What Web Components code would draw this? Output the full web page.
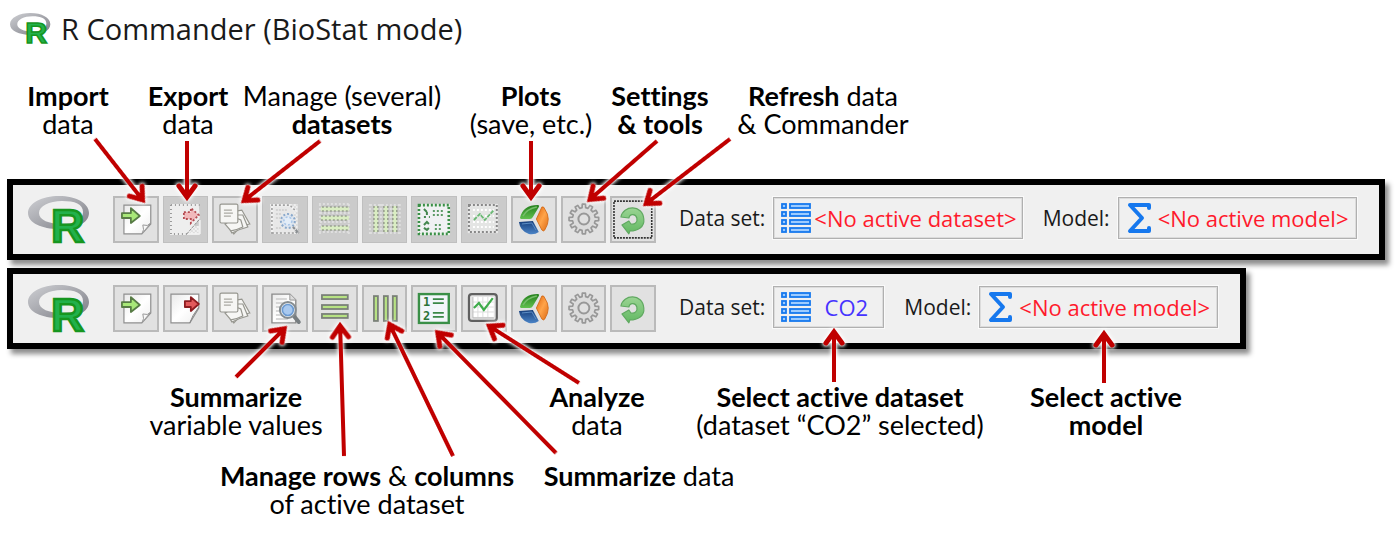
<!DOCTYPE html>
<html lang="en">
<head>
<meta charset="utf-8">
<title>R Commander (BioStat mode)</title>
<style>
  body { margin: 0; background: #fff; color: #000; font-family: "Open Sans", "Noto Sans", sans-serif; }
</style>
</head>
<body>
<commander-guide></commander-guide>

<script>
const define = (name, html) => customElements.define(name, class extends HTMLElement {
  constructor() {
    super();
    this.attachShadow({ mode: "open" });
  }
  connectedCallback() {
    this.shadowRoot.innerHTML = typeof html === "function" ? html(this) : html;
  }
});

/* Gear outline with evenly spaced teeth */
function gear(cx, cy, outer, inner, teeth) {
  const points = [];
  for (let i = 0; i < teeth; i++) {
    const a = (i * 2 * Math.PI) / teeth, s = Math.PI / teeth;
    for (const [r, o] of [[inner, -0.6], [outer, -0.4], [outer, 0.4], [inner, 0.6]])
      points.push((cx + r * Math.sin(a + o * s)).toFixed(1) + " " + (cy - r * Math.cos(a + o * s)).toFixed(1));
  }
  return "M" + points.join("L") + "Z";
}

const defs = `<defs>
  <linearGradient id="paper" x1="0" y1="0" x2="1" y2="1"><stop offset="0" stop-color="#e9e9e9"/><stop offset=".5" stop-color="#fff"/><stop offset="1" stop-color="#eee"/></linearGradient>
  <linearGradient id="green" x1="0" y1="0" x2="0" y2="1"><stop offset="0" stop-color="#237f1c"/><stop offset="1" stop-color="#62c04f"/></linearGradient>
  <linearGradient id="blue" x1="0" y1="0" x2="0" y2="1"><stop offset="0" stop-color="#173f7c"/><stop offset="1" stop-color="#4a83c6"/></linearGradient>
  <linearGradient id="orange" x1="0" y1="0" x2="1" y2="1"><stop offset="0" stop-color="#e0650c"/><stop offset=".5" stop-color="#ffa44a"/><stop offset="1" stop-color="#dc6a14"/></linearGradient>
  <linearGradient id="leaf" x1="0" y1="0" x2="0" y2="1"><stop offset="0" stop-color="#9ad493"/><stop offset="1" stop-color="#62b862"/></linearGradient>
  <pattern id="dots" width="4" height="4" patternUnits="userSpaceOnUse"><rect width="4" height="4" fill="#777"/><rect width="2" height="2" fill="#fff"/><rect x="2" y="2" width="2" height="2" fill="#fff"/></pattern>
  <mask id="stipple"><rect width="46" height="47" fill="url(#dots)"/></mask>
</defs>`;

const page = `
  <path d="M10 9H28L34 15V38H10Z" fill="url(#paper)" stroke="#8c8c8c" stroke-width="1.4"/>
  <path d="M28 9V15H34" fill="#ddd" stroke="#999"/>
  <path d="M14 14H25M14 18H23M14 22H20M14 26H18M14 30H20M14 34H26" stroke="#ccc" stroke-width="1.4"/>`;

const icons = {
  "import": `
    <path d="M11 9H38V28L29 38H11Z" fill="url(#paper)" stroke="#8f8f8f" stroke-width="1.2"/>
    <path d="M29 38Q32 34 30 29Q35 31 38 27Z" fill="#f8f8f8" stroke="#999"/>
    <path d="M9 17H18V12L27 20L18 27V22H9Z" fill="#a8e878" stroke="#587c46" stroke-width="1.8" stroke-linejoin="round"/>`,
  "export": `
    <path d="M8 9H36V23L27 38H8Z" fill="url(#paper)" stroke="#8f8f8f" stroke-width="1.2"/>
    <path d="M27 38Q29 31 36 22" fill="none" stroke="#888"/>
    <path d="M22 16H28V12L36 19L28 26V22H22Z" fill="#e25a5c" stroke="#8d1c20" stroke-width="1.8" stroke-linejoin="round"/>`,
  "export-off": `
    <path d="M8 9H36L37 22L26 38H8Z" fill="#eee"/>
    <path d="M8 9H37M8 9V38H37M37 24V38" fill="none" stroke="#eee" stroke-width="2"/>
    <path d="M8 9H37M8 9V38H27" fill="none" stroke="#999" stroke-width="2" stroke-dasharray="1 3"/>
    <path d="M30 30H37V38H24Z" fill="#f2f2f2" mask="url(#stipple)"/>
    <path d="M24 38L36 24" stroke="#888" stroke-dasharray="3 1"/>
    <path d="M21 16H28V12L36 19L28 27V23H21Z" fill="#f1b9bb"/>
    <path d="M21 16H28V12L36 19L28 27V23H21Z" fill="none" stroke="#b44c52" stroke-width="1.8" stroke-dasharray="2 2"/>`,
  "datasets": `
    <g fill="#f6f6f4" stroke="#96968f" stroke-width="1.2">
      <path d="M24 15L30 14L38 28Q29 29 22 38L15 27Z"/>
      <path d="M24 19L31 19L36 31Q28 33 20 37L15 28Z"/>
      <path d="M24 22L29 24L31 31Q25 34 19 35L13 28Z"/>
      <rect x="8" y="8" width="18" height="19" rx="1.5"/>
    </g>
    <path d="M12 14H20M12 17H21M12 20H19" stroke="#aaa9a2" stroke-width="1.3"/>`,
  "lens": `${page}
    <path d="M32 31L37 37" stroke="#777d80" stroke-width="4" stroke-linecap="round"/>
    <circle cx="26" cy="25" r="8" fill="#e8edf2" stroke="#858c90" stroke-width="2"/>
    <circle cx="26" cy="25" r="5.5" fill="#a9c9ef" stroke="#6c9bd2" stroke-width="1.6"/>`,
  "lens-off": `<path d="M8 8H36V38H10Z" fill="#eee" mask="url(#stipple)"/>
    <path d="M11 10H27L32 16V37H11Z" fill="#e8e8e8"/>
    <path d="M10 38V9H28L34 15" fill="none" stroke="#f2f2f2" stroke-width="2.4"/>
    <path d="M10 38V9H28L34 15M10 37H34" fill="none" stroke="#a0a0a0" stroke-width="1.6" stroke-dasharray="2 2"/>
    <path d="M14 14H25M14 18H20M14 22H18M14 32H20" stroke="#ccc" stroke-width="1.4" stroke-dasharray="2 1"/>
    <circle cx="26" cy="25" r="7" fill="#dde5ef" stroke="#8aa9cc" stroke-width="2" stroke-dasharray="2 2"/>
    <circle cx="26" cy="25" r="4" fill="#e3edf8" stroke="#a9c6e8" stroke-width="1.6" stroke-dasharray="2 2"/>
    <path d="M31 31L37 37M34 37L37 34" stroke="#8b8f92" stroke-width="2" stroke-dasharray="3 1"/>`,
  "rows": `<g fill="#b7e283" stroke="#7a8078" stroke-width="1.8">
      <rect x="10" y="10" width="26" height="4"/><rect x="10" y="20" width="26" height="4"/><rect x="10" y="29" width="26" height="4"/></g>`,
  "rows-off": `<g fill="none" stroke="#dfdfdf" stroke-width="2" stroke-dasharray="2 2"><path d="M7 8H38M8 17H38M8 26H38M7 36H38M8 8V38M37 8V38"/></g>
    <g fill="#d9edc2"><path d="M9 11H37V15H9ZM9 20H37V24H9ZM9 30H37V34H9Z"/></g>
    <g fill="none" stroke="#98a08f" stroke-width="1.6" stroke-dasharray="2 2"><path d="M10 11H36M10 15H36M9 20H36M9 24H36M10 30H36M10 34H36"/></g>`,
  "cols": `<g fill="#b7e283" stroke="#7a8078" stroke-width="1.8">
      <rect x="12" y="11" width="4" height="25"/><rect x="22" y="11" width="4" height="25"/><rect x="31" y="11" width="4" height="25"/></g>`,
  "cols-off": `<g fill="none" stroke="#dfdfdf" stroke-width="2" stroke-dasharray="2 2"><path d="M8 8V38M19 8V38M29 8V38M38 8V38M8 9H38M8 37H38"/></g>
    <g fill="#d9edc2"><path d="M12 10V36H16V10ZM22 10V36H26V10ZM31 10V36H35V10Z"/></g>
    <g fill="none" stroke="#98a08f" stroke-width="1.6" stroke-dasharray="2 2"><path d="M12 10V36M16 10V36M22 10V36M26 10V36M31 10V36M35 10V36"/></g>`,
  "numbers": `<rect x="8" y="9" width="30" height="29" fill="#f3f6fb" stroke="#3a8f47" stroke-width="2.4"/>
    <g class="digits"><text x="12" y="21">1</text><text x="12" y="35">2</text></g>
    <path d="M22 14H33M22 18H33M22 28H33M22 32H33" stroke="#3b8848" stroke-width="1.8"/>`,
  "numbers-off": `<rect x="8" y="9" width="30" height="29" fill="#f0f1f3" stroke="#e8f0e8" stroke-width="2.4"/>
    <rect x="8" y="9" width="30" height="29" fill="none" stroke="#3a8f47" stroke-width="2.6" stroke-dasharray="2 2"/>
    <path d="M13 13L16 16M16 16V19M13 21H15M18 21H19M13 29L16 26L18 28M13 32L16 34L18 32" fill="none" stroke="#44874e" stroke-width="2"/>
    <path d="M22 15H33M22 19H33M24 29H31M24 33H31" stroke="#5c9a65" stroke-width="2" stroke-dasharray="2 2"/>`,
  "chart": `<rect x="8" y="9" width="28" height="27" rx="3" fill="#e4e4e4" stroke="#606060" stroke-width="2.2"/>
    <rect x="12" y="12" width="21" height="20" fill="#fff"/>
    <path d="M17 12V32M22 12V32M27 12V32M12 17H33M12 22H33M12 27H33" stroke="#dedede"/>
    <path d="M12 12V33H33" stroke="#bbb" fill="none"/>
    <path d="M13 23L18 18L23 25L32 13" fill="none" stroke="#3fac4b" stroke-width="2.2"/>`,
  "chart-off": `<rect x="8" y="9" width="28" height="27" fill="#e4e5e4" stroke="#e8e8e8" stroke-width="2.4"/>
    <rect x="8" y="9" width="28" height="27" fill="none" stroke="#888" stroke-width="2" stroke-dasharray="2 2"/>
    <path d="M12 14H33M12 20H33M12 26H33M12 31H33" stroke="#fff" stroke-width="2" stroke-dasharray="2 2"/>
    <path d="M13 24L19 18L24 24L33 14" fill="none" stroke="#69b973" stroke-width="1.8" stroke-dasharray="4 1"/>`,
  "pie": `<path d="M9 22Q12 9 27 9Q29 9 28 11L22 21Q21 23 19 23L10 23Z" fill="url(#green)"/>
    <path d="M12 20Q16 13 26 11" fill="none" stroke="#75bd6a" stroke-width="1.5"/>
    <path d="M8 26L22 25L28 36Q24 39 18 38Q9 35 8 26Z" fill="url(#blue)"/>
    <path d="M11 28L21 27L25 34" fill="none" stroke="#5e8ec6"/>
    <path d="M31 11Q33 10 34 13Q41 23 34 34Q33 36 31 34L26 24Q25 23 26 22Z" fill="url(#orange)" stroke="#cf6412" stroke-width=".8"/>`,
  "gear": `<path d="${gear(23, 23, 15, 11.5, 12)}" fill="#dcdcdc" stroke="#989898" stroke-width="1.7" stroke-linejoin="round"/>
    <circle cx="23" cy="23" r="5.5" fill="#e1e1e1" stroke="#989898" stroke-width="2"/>`,
  "refresh": `<path d="M11 21C13 9 33 8 34 23C35 31 28 35 20 35L19 38L12 29L19 25L21 28C25 29 28 26 27 22C26 18 20 17 19 22Z" fill="url(#leaf)" stroke="#60a961" stroke-width="1.2" stroke-linejoin="round"/>`
};
icons["refresh-focus"] = icons.refresh + `<rect x="4" y="5" width="38" height="37" fill="none" stroke="#333" stroke-width="1.6" stroke-dasharray="2 1"/>`;

define("r-logo", `
<style>
  :host { display: block; width: 62px; }
  svg { display: block; width: 100%; overflow: visible; }
  text { font: bold 46px "Liberation Sans", sans-serif; fill: #22b14c; stroke: #16961f; stroke-width: 2.4px; }
</style>
<svg viewBox="0 0 62 47" role="img" aria-label="R logo">
  <defs><linearGradient id="ring" x1="0" y1="0" x2="1" y2="1">
    <stop offset="0" stop-color="#cfd0d4"/><stop offset=".5" stop-color="#a5a6ac"/><stop offset="1" stop-color="#7b7c84"/></linearGradient></defs>
  <path fill="url(#ring)" fill-rule="evenodd" d="M31 0C48 0 61 7 61 17S48 33 31 33S0 27 0 17S14 0 31 0ZM34 5C21 5 11 10 11 17S21 28 34 28S55 24 55 16S47 5 34 5Z"/>
  <text x="23" y="46">R</text>
</svg>`);

define("tool-button", host => `
<style>
  :host { display: block; }
  button { display: block; box-sizing: border-box; width: 100%; height: 47px; padding: 0; border: 0; background: #e1e1e1; box-shadow: inset 0 0 0 2px #bababa; }
  button:disabled { background: #cbcbcb; box-shadow: inset 0 0 0 1px #bfbfbf; }
  svg { display: block; width: 100%; height: 47px; }
  .digits { font: bold 12px "DejaVu Sans Mono", monospace; fill: #2c7438; }
</style>
<button type="button" aria-label="${host.getAttribute("label")}" ${host.hasAttribute("off") ? "disabled" : ""}>
  <svg viewBox="0 0 46 47" aria-hidden="true">${defs}${icons[host.getAttribute("icon")]}</svg>
</button>`);

define("picker-button", host => `
<style>
  :host { display: block; }
  .field { display: flex; align-items: center; gap: 8px; }
  .caption { font-size: 21px; line-height: 44px; color: #1a1a1a; white-space: nowrap; }
  button { display: flex; align-items: center; gap: 6px; height: 42px; padding: 0 8px; border: 0; background: #f0f0f0;
    box-shadow: inset 0 0 0 1px #b0b0b0, inset 0 0 0 2px #dcdcdc, 0 0 0 1px #fafafa; font: inherit; font-size: 22px; line-height: 42px; color: #ff1a2c; white-space: nowrap; }
  button.list { gap: 3px; padding-right: 6px; }
  button.chosen { color: #4633ff; }
  .value { min-width: 64px; text-align: center; }
  svg { display: block; height: 30px; }
</style>
<div class="field">
  <span class="caption" id="caption">${host.getAttribute("caption")}</span>
  <button type="button" class="${host.getAttribute("icon")} ${host.hasAttribute("chosen") ? "chosen" : ""}" aria-labelledby="caption value">
    ${host.getAttribute("icon") === "list"
      ? `<svg width="30" viewBox="0 0 30 30" aria-hidden="true" fill="#9ccbff" stroke="#1678ee" stroke-width="1.8">
          ${[1, 9, 17, 25].map(y => `<rect x="1" y="${y}" width="4" height="4"/><rect x="9" y="${y}" width="20" height="4"/>`).join("")}</svg>`
      : `<svg width="26" viewBox="0 0 26 30" aria-hidden="true"><path d="M23 5V2H4L16 15L4 28H23V25" fill="none" stroke="#1678ee" stroke-width="4" stroke-linejoin="round" stroke-linecap="round"/></svg>`}
    <span class="value" id="value"><slot></slot></span>
  </button>
</div>`);

define("tool-bar", host => {
  const off = host.hasAttribute("empty");
  const tools = [
    ["import", "Import data", false], ["export", "Export data", off], ["datasets", "Manage datasets", false],
    ["lens", "Summarize variable values", off], ["rows", "Manage rows", off], ["cols", "Manage columns", off],
    ["numbers", "Summarize data", off], ["chart", "Analyze data", off], ["pie", "Plots", false],
    ["gear", "Settings and tools", false], [off ? "refresh-focus" : "refresh", "Refresh", false]];
  return `
<style>
  :host { display: block; box-sizing: border-box; border: 6px solid #000; background: #f0f0f0; box-shadow: 4px 5px 5px rgba(0, 0, 0, .45); }
  .bar { display: flex; align-items: flex-start; gap: 23px; padding: 11px 22px 11px 15px; }
  .tools { display: grid; grid-template-columns: repeat(11, 1fr); gap: 4px; width: 543px; flex: none; }
  .pickers { display: flex; gap: 20px; }
</style>
<div class="bar">
  <r-logo></r-logo>
  <div class="tools">${tools.map(([icon, label, disabled]) =>
    `<tool-button icon="${icon}${disabled ? "-off" : ""}" label="${label}" ${disabled ? "off" : ""}></tool-button>`).join("")}</div>
  <div class="pickers"><slot></slot></div>
</div>`;
});

define("call-out", `
<style>
  :host { display: block; justify-self: center; text-align: center; white-space: nowrap; font: 27px/28px Lato, "Open Sans", sans-serif; font-variant-ligatures: none; }
</style>
<slot></slot>`);

/* Each arrow is [tail x, tail y, tip x, tip y] */
define("arrow-layer", () => {
  const arrows = [
    [95, 139, 145, 203], [187, 141, 187, 201], [320, 141, 241, 203], [531, 141, 531, 201], [657, 141, 587, 202],
    [730, 139, 643, 206], [236, 377, 287, 326], [344, 456, 340, 322], [453, 456, 388, 321], [556, 453, 435, 330],
    [579, 383, 486, 324], [834, 382, 834, 328], [1104, 383, 1104, 330]];
  return `
<style>
  :host { position: absolute; inset: 0; pointer-events: none; }
  svg { display: block; width: 100%; height: 100%; overflow: visible; }
  .arrow { fill: none; stroke: #c00000; filter: drop-shadow(0 0 2px #fff) drop-shadow(0 0 1px #fff); }
</style>
<svg aria-hidden="true">${arrows.map(([x1, y1, x2, y2]) => {
    const length = Math.hypot(x2 - x1, y2 - y1), angle = Math.atan2(y2 - y1, x2 - x1) * 180 / Math.PI;
    return `<g class="arrow" transform="translate(${x2} ${y2}) rotate(${angle})">
      <path d="M${-length} 0H-5" stroke-width="4"/>
      <path d="M-15 -8L-4 0L-15 8" stroke-width="5" stroke-linecap="round"/></g>`;
  }).join("")}</svg>`;
});

define("commander-guide", `
<style>
  :host { display: block; position: relative; overflow: hidden; }
  header { display: flex; align-items: center; gap: 10px; padding: 7px 10px 9px; }
  header r-logo { width: 41px; }
  h1 { margin: 0; font-weight: 400; font-size: 29px; line-height: 44px; color: #1a1a1a; }
  .notes { display: grid; padding-left: 8px; }
  .top { grid-template-columns: 120px 120px 188px 190px 68px 258px; padding-top: 22px; }
  .bars { display: flex; flex-direction: column; align-items: flex-start; gap: 8px; padding: 41px 13px 34px 7px; }
  .bars .wide { align-self: stretch; }
  .upper { grid-template-columns: 456px 266px 220px 312px; }
  .lower { grid-template-columns: 314px 230px; padding: 23px 0 24px 210px; }
</style>
<header><r-logo></r-logo><h1>R Commander (BioStat mode)</h1></header>
<div class="notes top">
  <call-out><b>Import</b><br>data</call-out>
  <call-out><b>Export</b><br>data</call-out>
  <call-out>Manage (several)<br><b>datasets</b></call-out>
  <call-out><b>Plots</b><br>(save, etc.)</call-out>
  <call-out><b>Settings<br>&amp; tools</b></call-out>
  <call-out><b>Refresh</b> data<br>&amp; Commander</call-out>
</div>
<div class="bars">
  <tool-bar class="wide" empty>
    <picker-button caption="Data set:" icon="list">&lt;No active dataset&gt;</picker-button>
    <picker-button caption="Model:" icon="sigma">&lt;No active model&gt;</picker-button>
  </tool-bar>
  <tool-bar>
    <picker-button caption="Data set:" icon="list" chosen>CO2</picker-button>
    <picker-button caption="Model:" icon="sigma">&lt;No active model&gt;</picker-button>
  </tool-bar>
</div>
<div class="notes upper">
  <call-out><b>Summarize</b><br>variable values</call-out>
  <call-out><b>Analyze</b><br>data</call-out>
  <call-out><b>Select active dataset</b><br>(dataset “CO2” selected)</call-out>
  <call-out><b>Select active<br>model</b></call-out>
</div>
<div class="notes lower">
  <call-out><b>Manage rows</b> &amp; <b>columns</b><br>of active dataset</call-out>
  <call-out><b>Summarize</b> data</call-out>
</div>
<arrow-layer></arrow-layer>`);
</script>
</body>
</html>
